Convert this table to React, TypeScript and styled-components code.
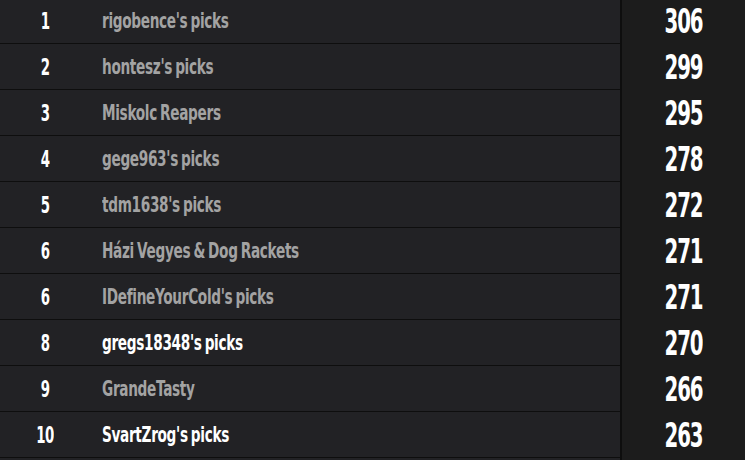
import styled, {createGlobalStyle} from "styled-components";

const GlobalStyle = createGlobalStyle`
    html, body {
        margin: 0;
        padding: 0;
        background: #1b1b1b;
        overflow: hidden;
    }
`

const StyledTable = styled.div`
    display: flex;

    flex-direction: column;

    width: 745px;
    height: 460px;

    overflow: hidden;

    font-family: "DejaVu Sans", "Liberation Sans", sans-serif;
    font-weight: 700;
`

const StyledRows = styled.div`
    display: flex;

    flex-direction: column;

    margin-top: -2px;
`

const StyledRow = styled.div`
    display: flex;

    flex-direction: row;

    height: 46px;
`

const StyledMain = styled.div`
    display: flex;

    flex-direction: row;
    align-items: center;

    width: 620px;
    height: 45px;

    background: #222225;
    border-bottom: 1px solid #0e0e0e;
`

// the reference uses a condensed face, so the glyphs are squeezed horizontally
const StyledRank = styled.span`
    display: inline-block;

    width: 90px;

    text-align: center;

    color: #ffffff;
    font-size: 23px;
    letter-spacing: -1px;

    transform: scaleX(0.58);
`

const StyledName = styled.span<{ $highlight?: boolean }>`
    display: inline-block;

    margin-left: 12px;

    color: ${({$highlight}) => $highlight ? "#ffffff" : "#a3a3a3"};
    font-size: 21px;
    letter-spacing: -0.5px;
    word-spacing: -2px;
    white-space: nowrap;

    transform: scaleX(0.65);
    transform-origin: left center;
`

const StyledScore = styled.div`
    display: flex;

    align-items: center;
    justify-content: center;

    flex: 1;

    border-left: 2px solid #0e0e0e;
    background: #1c1c1c;
`

const StyledScoreValue = styled.span`
    display: inline-block;

    color: #ffffff;
    font-size: 33px;
    letter-spacing: -2px;

    transform: scaleX(0.6);
`

const rows = [
	{rank: 1, name: "rigobence's picks", score: 306},
	{rank: 2, name: "hontesz's picks", score: 299},
	{rank: 3, name: "Miskolc Reapers", score: 295},
	{rank: 4, name: "gege963's picks", score: 278},
	{rank: 5, name: "tdm1638's picks", score: 272},
	{rank: 6, name: "Házi Vegyes & Dog Rackets", score: 271},
	{rank: 6, name: "IDefineYourCold's picks", score: 271},
	{rank: 8, name: "gregs18348's picks", score: 270, highlight: true},
	{rank: 9, name: "GrandeTasty", score: 266},
	{rank: 10, name: "SvartZrog's picks", score: 263, highlight: true},
	{rank: 11, name: "", score: 0},
]

export default function App() {
	return (
		<StyledTable>
			<GlobalStyle/>
			<StyledRows>
				{rows.map((row, i) => (
					<StyledRow key={i}>
						<StyledMain>
							<StyledRank>{row.name ? row.rank : ""}</StyledRank>
							<StyledName $highlight={row.highlight}>{row.name}</StyledName>
						</StyledMain>
						<StyledScore>
							<StyledScoreValue>{row.name ? row.score : ""}</StyledScoreValue>
						</StyledScore>
					</StyledRow>
				))}
			</StyledRows>
		</StyledTable>
	)
}
